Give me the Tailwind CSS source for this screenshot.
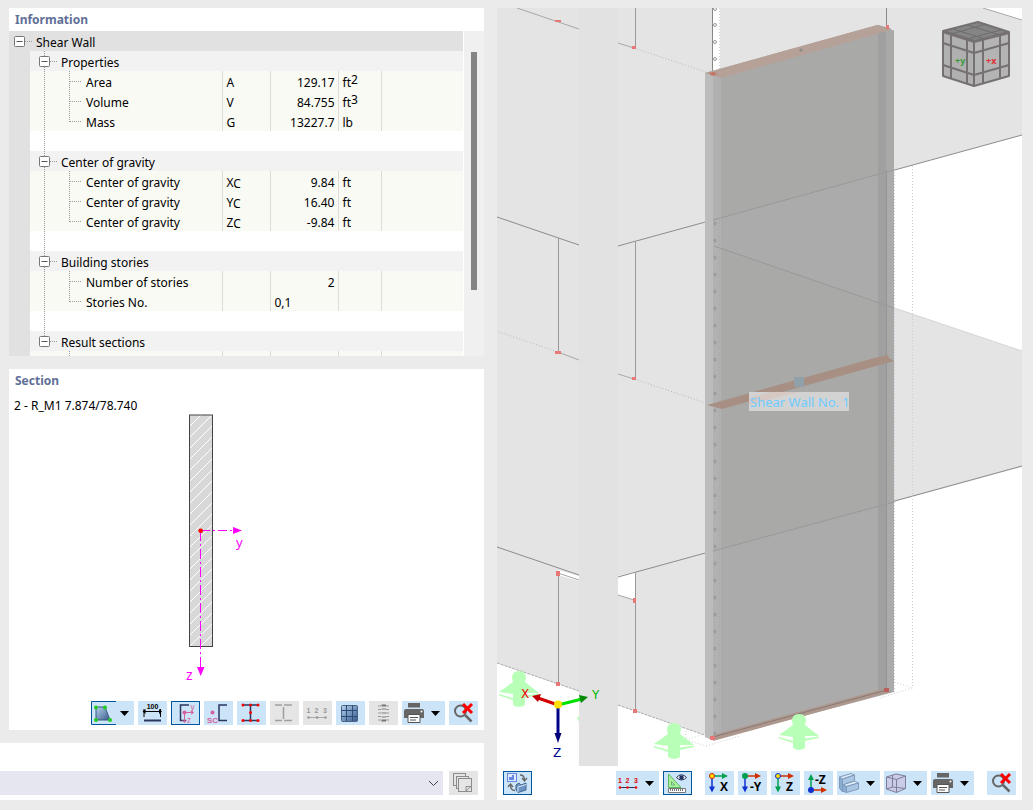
<!DOCTYPE html>
<html lang="en">
<head>
    <meta charset="UTF-8">
    <meta name="viewport" content="width=device-width, initial-scale=1.0">
    <title>Shear Wall</title>
    <script src="https://cdn.jsdelivr.net/npm/@tailwindcss/browser@4"></script>
</head>
<body class="bg-[#ebebeb] text-black text-[12px] font-['Noto_Sans','Open_Sans',sans-serif]">

    <!-- shared symbols -->
    <svg class="absolute h-0 w-0">
        <defs>
            <linearGradient id="blue" x1="0" y1="0" x2="1" y2="1">
                <stop offset="0" stop-color="#b5d3ec"/><stop offset="1" stop-color="#36598c"/>
            </linearGradient>
            <pattern id="hatch" width="11" height="11" patternUnits="userSpaceOnUse">
                <path d="M-1 12L12 -1M-1 1L1 -1M10 12L12 10" stroke="#fff" stroke-width="1"/>
            </pattern>
        </defs>
        <symbol id="branch" viewBox="0 0 31 20">
            <path d="M14.5 0V5M14.5 16V20M20 10.5H28" stroke="#9a9a9a" stroke-dasharray="1 1"/>
            <rect x="9.5" y="5.5" width="10" height="10" rx="1" fill="#fff" stroke="#777"/>
            <path d="M11.5 10.5H17.5" stroke="#555"/>
        </symbol>
        <symbol id="branch-last" viewBox="0 0 31 20">
            <path d="M14.5 0V5M20 10.5H28" stroke="#9a9a9a" stroke-dasharray="1 1"/>
            <rect x="9.5" y="5.5" width="10" height="10" rx="1" fill="#fff" stroke="#777"/>
            <path d="M11.5 10.5H17.5" stroke="#555"/>
        </symbol>
        <symbol id="leaf" viewBox="0 0 56 20">
            <path d="M14.5 0V20M39.5 0V20M40 10.5H52" stroke="#9a9a9a" stroke-dasharray="1 1"/>
        </symbol>
        <symbol id="leaf-end" viewBox="0 0 56 20">
            <path d="M14.5 0V20M39.5 0V11M40 10.5H52" stroke="#9a9a9a" stroke-dasharray="1 1"/>
        </symbol>
        <symbol id="caret" viewBox="0 0 9 5"><path d="M0 0H9L4.5 5Z" fill="#000"/></symbol>
        <symbol id="printer" viewBox="0 0 29 24">
            <path d="M6 2H18V6.5H6Z" fill="#666"/>
            <path d="M4 8H20Q22 8 22 10V17H2V10Q2 8 4 8Z" fill="#666"/>
            <circle cx="19.5" cy="10.5" r="1" fill="#fff"/>
            <path d="M6 13.5H18V21.5H6Z" fill="#fff" stroke="#555"/>
            <path d="M8 16.5H16M8 19H14" stroke="#555"/>
        </symbol>
        <symbol id="zoom-off" viewBox="0 0 29 24">
            <circle cx="11.5" cy="10" r="5.5" fill="none" stroke="#666" stroke-width="2"/>
            <path d="M16 14L22.5 20.5" stroke="#666" stroke-width="2.5"/>
            <path d="M14 3L23 12M23 3L14 12" stroke="#f00" stroke-width="3"/>
        </symbol>
        <symbol id="support" viewBox="0 0 41 37">
            <path d="M13 7Q13 0 20 0T27 7L26 11L40 22L26 22V34Q20 38 14 34V23L0 21L14 11Z" fill="#b8ffb8"/>
            <path d="M0 23L14 27V29L0 24.5ZM26 24.5L40 22.5V24L26 27Z" fill="#b8ffb8"/>
        </symbol>
    </svg>

    <div class="grid h-screen grid-cols-[484fr_525fr] gap-[13px] pt-2 pr-[11px] pb-[10px]">

        <div class="flex min-h-0 min-w-0 flex-col gap-[13px]">

            <!-- Information -->
            <section class="ml-[9px] flex min-h-0 flex-[348] flex-col overflow-hidden bg-white">
                <h2 class="h-[23px] shrink-0 pl-[6px] leading-[23px] font-bold text-[#5f6f98]">Information</h2>
                <div class="flex min-h-0 flex-1">
                    <div class="min-w-0 flex-1 overflow-hidden">
                        <div class="flex h-5 bg-[#e1e1e1]">
                            <svg class="h-5 w-[27px]" viewBox="0 0 27 20">
                                <path d="M16 10.5H24" stroke="#9a9a9a" stroke-dasharray="1 1"/>
                                <rect x="5.5" y="5.5" width="10" height="10" rx="1" fill="#fff" stroke="#777"/>
                                <path d="M7.5 10.5H13.5" stroke="#555"/>
                            </svg>
                            <span class="pt-1 leading-4">Shear Wall</span>
                        </div>
                        <div class="border-l-[21px] border-[#e1e1e1]">
                            <table class="w-full table-fixed border-collapse leading-4 [&_div]:pt-1 [&_td]:h-5 [&_td]:p-0 [&_th]:h-5 [&_th]:p-0 [&_th]:text-left [&_th]:font-normal [&_div>svg]:-mt-1">
                                <colgroup>
                                    <col><col class="w-[48px]"><col class="w-[68px]"><col class="w-[43px]"><col class="w-[82px]">
                                </colgroup>
                                <tbody>
                                    <tr class="bg-[#f2f2f2]"><th colspan="5"><div class="flex"><svg class="h-5 w-[31px]"><use href="#branch"/></svg>Properties</div></th></tr>
                                    <tr class="bg-[#f9faf4] [&>td]:border-l [&>td]:border-[#dcdcd8]"><th><div class="flex"><svg class="h-5 w-14"><use href="#leaf"/></svg>Area</div></th><td><div class="pl-1">A</div></td><td><div class="pr-[3px] text-right">129.17</div></td><td><div class="pl-1">ft<span class="relative -top-[3px]">2</span></div></td><td></td></tr>
                                    <tr class="bg-[#f9faf4] [&>td]:border-l [&>td]:border-[#dcdcd8]"><th><div class="flex"><svg class="h-5 w-14"><use href="#leaf"/></svg>Volume</div></th><td><div class="pl-1">V</div></td><td><div class="pr-[3px] text-right">84.755</div></td><td><div class="pl-1">ft<span class="relative -top-[3px]">3</span></div></td><td></td></tr>
                                    <tr class="bg-[#f9faf4] [&>td]:border-l [&>td]:border-[#dcdcd8]"><th><div class="flex"><svg class="h-5 w-14"><use href="#leaf-end"/></svg>Mass</div></th><td><div class="pl-1">G</div></td><td><div class="pr-[3px] text-right">13227.7</div></td><td><div class="pl-1">lb</div></td><td></td></tr>
                                    <tr><td colspan="5"><svg class="h-5 w-14"><path d="M14.5 0V20" stroke="#9a9a9a" stroke-dasharray="1 1"/></svg></td></tr>

                                    <tr class="bg-[#f2f2f2]"><th colspan="5"><div class="flex"><svg class="h-5 w-[31px]"><use href="#branch"/></svg>Center of gravity</div></th></tr>
                                    <tr class="bg-[#f9faf4] [&>td]:border-l [&>td]:border-[#dcdcd8]"><th><div class="flex"><svg class="h-5 w-14"><use href="#leaf"/></svg>Center of gravity</div></th><td><div class="pl-1">X<span class="relative top-px">C</span></div></td><td><div class="pr-[3px] text-right">9.84</div></td><td><div class="pl-1">ft</div></td><td></td></tr>
                                    <tr class="bg-[#f9faf4] [&>td]:border-l [&>td]:border-[#dcdcd8]"><th><div class="flex"><svg class="h-5 w-14"><use href="#leaf"/></svg>Center of gravity</div></th><td><div class="pl-1">Y<span class="relative top-px">C</span></div></td><td><div class="pr-[3px] text-right">16.40</div></td><td><div class="pl-1">ft</div></td><td></td></tr>
                                    <tr class="bg-[#f9faf4] [&>td]:border-l [&>td]:border-[#dcdcd8]"><th><div class="flex"><svg class="h-5 w-14"><use href="#leaf-end"/></svg>Center of gravity</div></th><td><div class="pl-1">Z<span class="relative top-px">C</span></div></td><td><div class="pr-[3px] text-right">-9.84</div></td><td><div class="pl-1">ft</div></td><td></td></tr>
                                    <tr><td colspan="5"><svg class="h-5 w-14"><path d="M14.5 0V20" stroke="#9a9a9a" stroke-dasharray="1 1"/></svg></td></tr>

                                    <tr class="bg-[#f2f2f2]"><th colspan="5"><div class="flex"><svg class="h-5 w-[31px]"><use href="#branch"/></svg>Building stories</div></th></tr>
                                    <tr class="bg-[#f9faf4] [&>td]:border-l [&>td]:border-[#dcdcd8]"><th><div class="flex"><svg class="h-5 w-14"><use href="#leaf"/></svg>Number of stories</div></th><td></td><td><div class="pr-[3px] text-right">2</div></td><td></td><td></td></tr>
                                    <tr class="bg-[#f9faf4] [&>td]:border-l [&>td]:border-[#dcdcd8]"><th><div class="flex"><svg class="h-5 w-14"><use href="#leaf-end"/></svg>Stories No.</div></th><td></td><td><div class="pl-1">0,1</div></td><td></td><td></td></tr>
                                    <tr><td colspan="5"><svg class="h-5 w-14"><path d="M14.5 0V20" stroke="#9a9a9a" stroke-dasharray="1 1"/></svg></td></tr>

                                    <tr class="bg-[#f2f2f2]"><th colspan="5"><div class="flex"><svg class="h-5 w-[31px]"><use href="#branch-last"/></svg>Result sections</div></th></tr>
                                    <tr class="bg-[#f9faf4] [&>td]:border-l [&>td]:border-[#dcdcd8]"><th><svg class="h-5 w-14"><path d="M39.5 0V20" stroke="#9a9a9a" stroke-dasharray="1 1"/></svg></th><td></td><td></td><td></td><td></td></tr>
                                </tbody>
                            </table>
                        </div>
                    </div>
                    <div class="ml-px w-5 bg-[#f0f0f0] pt-[21px] pl-[7px]">
                        <div class="h-[238px] w-[6px] bg-[#858585]"></div>
                    </div>
                </div>
            </section>

            <!-- Section -->
            <section class="ml-[9px] flex min-h-0 flex-[361] flex-col bg-white">
                <h2 class="h-[23px] pl-[6px] leading-[23px] font-bold text-[#5f6f98]">Section</h2>
                <p class="mt-1 h-[18px] pl-[5px] leading-5">2 - R_M1 7.874/78.740</p>
                <svg class="min-h-0 w-full flex-1" viewBox="9 414 475 287" preserveAspectRatio="xMidYMid meet">
                    <rect x="189.500" y="415" width="23" height="231.500" fill="#d8d8d8"/>
                    <rect x="189.500" y="415" width="23" height="231.500" fill="url(#hatch)" stroke="#444"/>
                    <path d="M201 530.500H233" stroke="#f0f" stroke-dasharray="9 3 2 3"/>
                    <path d="M200.500 531V667" stroke="#f0f" stroke-dasharray="10 3 2 3"/>
                    <path d="M233 527L242 530.500L233 534ZM197 667H204.500L200.700 676Z" fill="#f0f"/>
                    <circle cx="200.700" cy="530.700" r="2.300" fill="#f00"/>
                    <text x="236" y="547" font-size="13" fill="#f0f">y</text>
                    <text x="186" y="680" font-size="14" fill="#f0f">z</text>
                </svg>
                <div class="mb-[5px] flex h-6 justify-end gap-1 pr-[6px]">
                    <button aria-label="Stress points" class="flex w-[43px] items-center bg-[#cce4f7]">
                        <svg class="h-6 w-[29px]" viewBox="0 0 29 24">
                            <path d="M25 .5H.5V23.5H25" fill="none" stroke="#00559f"/>
                            <path d="M5 6H14L19 19H5Z" fill="url(#blue)" stroke="#3a5a80"/>
                            <g fill="#2c2"><circle cx="5" cy="6.500" r="2"/><circle cx="14" cy="6.500" r="2"/><circle cx="5" cy="19" r="2"/><circle cx="19" cy="19" r="2"/></g>
                        </svg>
                        <svg class="h-[5px] w-[9px]"><use href="#caret"/></svg>
                    </button>
                    <button aria-label="Dimensions" class="w-[29px] bg-[#cce4f7]">
                        <svg class="h-6 w-[29px]" viewBox="0 0 29 24">
                            <text x="14.500" y="8" font-size="7" font-weight="700" font-family="Liberation Sans" text-anchor="middle">100</text>
                            <path d="M6 8V16M22.5 8V16M6 10.5H22" stroke="#000"/>
                            <path d="M4.5 10.5L7.5 8V13ZM24 10.5L21 8V13Z" fill="#000"/>
                            <path d="M6 19.5H23" stroke="#2a3560" stroke-width="2"/>
                        </svg>
                    </button>
                    <button aria-label="Principal axes" class="w-[29px] bg-[#cce4f7]">
                        <svg class="h-6 w-[29px]" viewBox="0 0 29 24">
                            <rect x=".5" y=".5" width="28" height="23" fill="none" stroke="#00559f"/>
                            <path d="M18 4H9.500V19.500H15" fill="none" stroke="#2a3560" stroke-width="1.500"/>
                            <path d="M13.500 11.500H22M13.500 11.500V21M20 9.500L22.500 11.500L20 13.500M11.500 19L13.500 21.500L15.500 19" fill="none" stroke="#d4609c"/>
                            <circle cx="13.500" cy="11.500" r="2" fill="#d4609c"/>
                            <text x="19.500" y="8.500" font-size="8" fill="#d4609c">y</text>
                            <text x="16" y="21.500" font-size="8" fill="#d4609c">z</text>
                        </svg>
                    </button>
                    <button aria-label="Shear center" class="w-[29px] bg-[#cce4f7]">
                        <svg class="h-6 w-[29px]" viewBox="0 0 29 24">
                            <path d="M23 4H15V19.500H23" fill="none" stroke="#2a3560" stroke-width="1.500"/>
                            <circle cx="8.500" cy="11.500" r="2" fill="#d4609c"/>
                            <text x="3" y="22" font-size="8" font-family="Liberation Sans" font-weight="700" fill="#d4609c">SC</text>
                        </svg>
                    </button>
                    <button aria-label="Section points" class="w-[29px] bg-[#cce4f7]">
                        <svg class="h-6 w-[29px]" viewBox="0 0 29 24">
                            <path d="M6 4H21M6 19.500H21M13.500 4V19" stroke="#2a3560" stroke-width="1.500"/>
                            <g fill="#f00"><circle cx="6" cy="4" r="1.500"/><circle cx="13.500" cy="4" r="1.500"/><circle cx="21" cy="4" r="1.500"/><circle cx="13.500" cy="11.500" r="1.500"/><circle cx="6" cy="19.500" r="1.500"/><circle cx="13.500" cy="19.500" r="1.500"/><circle cx="21" cy="19.500" r="1.500"/></g>
                        </svg>
                    </button>
                    <button aria-label="Section parts" class="w-[29px] bg-[#e5e5e5]">
                        <svg class="h-6 w-[29px]" viewBox="0 0 29 24">
                            <path d="M5 4H12M14 4H22M5 19.500H12M14 19.500H22M13.500 6V18" stroke="#a0a0a0" stroke-width="1.500"/>
                        </svg>
                    </button>
                    <button aria-label="Numbering" class="w-[29px] bg-[#e5e5e5]">
                        <svg class="h-6 w-[29px]" viewBox="0 0 29 24">
                            <g font-size="7" font-weight="700" font-family="Liberation Sans" fill="#999"><text x="3.500" y="12">1</text><text x="11.500" y="12">2</text><text x="20" y="12">3</text></g>
                            <path d="M5 16.500H23" stroke="#aaa"/>
                            <g fill="#999"><circle cx="5.500" cy="16.500" r="1.300"/><circle cx="14" cy="16.500" r="1.300"/><circle cx="22.500" cy="16.500" r="1.300"/></g>
                        </svg>
                    </button>
                    <button aria-label="Grid" class="w-[29px] bg-[#cce4f7]">
                        <svg class="h-6 w-[29px]" viewBox="0 0 29 24">
                            <rect x="5.500" y="4.500" width="16" height="16" rx="1" fill="url(#blue)" stroke="#4a6488"/>
                            <path d="M10.500 4V20M16.500 4V20M5 9.500H21M5 15.500H21" stroke="#2b4c78"/>
                        </svg>
                    </button>
                    <button aria-label="Values" class="w-[29px] bg-[#e5e5e5]">
                        <svg class="h-6 w-[29px]" viewBox="0 0 29 24">
                            <path d="M9 5H12M17 5H20M9 8.500H12M17 8.500H20M9 12H12M17 12H20M9 15.500H12M17 15.500H20M9 19H12M17 19H20" stroke="#999"/>
                            <path d="M12.500 4.500H17M12.500 19.500H17" stroke="#777" stroke-width="2"/>
                            <path d="M12.500 8H17M12.500 12H17M12.500 16H17" stroke="#b0b0b0" stroke-width="2"/>
                        </svg>
                    </button>
                    <button aria-label="Print" class="flex w-[43px] items-center bg-[#cce4f7]">
                        <svg class="h-6 w-[29px]"><use href="#printer"/></svg>
                        <svg class="h-[5px] w-[9px]"><use href="#caret"/></svg>
                    </button>
                    <button aria-label="Reset view" class="w-[29px] bg-[#cce4f7]"><svg class="h-6 w-[29px]"><use href="#zoom-off"/></svg></button>
                </div>
            </section>

            <!-- object selection -->
            <div class="flex items-end gap-[6px] bg-white pt-7 pr-[6px] pb-[5px]">
                <div class="relative flex-1">
                    <select aria-label="Object" class="block h-6 w-full appearance-none bg-[#e6e6f1]"><option></option></select>
                    <svg class="pointer-events-none absolute top-[9px] right-1 h-[7px] w-[11px]" viewBox="0 0 11 7"><path d="M1 1L5.500 5.500L10 1" fill="none" stroke="#444"/></svg>
                </div>
                <button aria-label="Copy" class="h-6 w-[29px] bg-[#e5e5e5]">
                    <svg class="h-6 w-[29px]" viewBox="0 0 29 24">
                        <g fill="#e5e5e5" stroke="#8c8c8c"><rect x="4.500" y="2.500" width="12" height="12"/><rect x="7.500" y="5.500" width="12" height="12"/><rect x="9.500" y="7.500" width="13" height="13"/><path d="M17 20V15.500H22M17 20L22 15.500"/></g>
                    </svg>
                </button>
            </div>
        </div>

        <!-- model view -->
        <div class="flex min-h-0 min-w-0 flex-col bg-white">
            <svg class="min-h-0 w-full flex-1" viewBox="497 8 525 758" preserveAspectRatio="xMidYMid slice">
                <!-- slabs and walls -->
                <g fill="#e4e4e4">
                    <path d="M497 8H983L1022 20V135L714 219V246L1022 351V467L714 551V738L618 705L579 691L497 663Z"/>
                    <path d="M579 8H618V766H579Z" fill="#e2e2e2"/>
                </g>
                <path d="M713 8H720V72H713ZM618 576L635 572V600L618 595ZM558 570L579 576V581L558 575Z" fill="#fff"/>
                <g fill="none" stroke="#999">
                    <path d="M497 217L579 245M618 246L1022 135M497 547L579 575M618 577L1022 466" stroke="#8c8c8c"/>
                    <path d="M517 8L579 29M618 43L634 48M558 352L579 360M618 374L634 379M618 595L634 600M558 573L579 580M983 8L1022 20" stroke="#a8a8a8"/>
                    <path d="M634 48L706 72M499 332L558 352M634 379L706 403" stroke="#b8b8b8" stroke-dasharray="1 2"/>
                    <path d="M497 663L579 691M618 705L713 738" stroke="#aaa" stroke-dasharray="3 1"/>
                    <path d="M558.500 238V351M558.500 573V684M635.500 8V47M635.500 242V378M635.500 573V711"/>
                    <path d="M712.500 8V72M886.500 8V27" stroke="#888"/>
                    <path d="M894 308L1022 351" stroke="#d6d6d6"/>
                    <path d="M719.500 8V72M894.500 172V692M912.500 166V688L894 682M912 688L880 698M686 731V740L706 746L740 736M686 740L706 733" stroke="#ccccd6" stroke-dasharray="1 2"/>
                </g>
                <g fill="none" stroke="#999"><circle cx="715" cy="9" r="1.500"/><circle cx="715" cy="25" r="1.500"/><circle cx="715" cy="42" r="1.500"/><circle cx="715" cy="59" r="1.500"/></g>
                <!-- wall -->
                <path d="M705 73L878 25L890 28L894 32V692L713 740L705 737Z" fill="#ababab"/>
                <path d="M721 78L894 30V170L721 218ZM721 248L894 308V502L721 549Z" fill="#a9a9a8"/>
                <path d="M705 73L713 75V740L705 737Z" fill="#bcbcbc"/>
                <path d="M713 75L721 78V738L713 740Z" fill="#b1b1b1"/>
                <path d="M878 25L886 28V693L878 695Z" fill="#a0a0a0"/>
                <path d="M886.500 170V690" stroke="#959595"/>
                <path d="M713 220L894 170M714 246L894 308M713 551L894 502" fill="none" stroke="#999"/>
                <path d="M715 223V735" stroke="#9d9d9d" stroke-width="3" stroke-linecap="round" stroke-dasharray="1 16"/>
                <path d="M719.500 220V735" stroke="#a6a6a6" stroke-dasharray="1 2"/>
                <path d="M705 73L877 25L891 30L721 78Z" fill="#b5a198"/>
                <path d="M707 405L878 357L888 355L889 358L894 361L722 409Z" fill="#a88f83"/>
                <path d="M713 735L886 688L891 692L713 741Z" fill="#ae988e"/>
                <path d="M713 737L887 690" stroke="#877a76"/>
                <circle cx="801" cy="50" r="1.500" fill="#888"/>
                <rect x="794" y="377" width="10" height="10" fill="#90a1a9"/>
                <path d="M709 73L714 72L717 74L712 76Z" fill="#c77462"/>
                <g fill="#e87878"><rect x="555" y="20" width="6" height="2"/><rect x="632" y="46" width="4" height="3"/><rect x="555" y="351" width="6" height="3"/><rect x="632" y="377" width="4" height="3"/><rect x="556" y="571" width="4" height="5"/><rect x="633" y="598" width="3" height="5"/><rect x="556" y="682" width="4" height="4"/><rect x="633" y="709" width="4" height="4"/><rect x="710" y="736" width="5" height="4"/><rect x="886" y="25" width="3" height="4"/></g>
                <rect x="884" y="688" width="5" height="4" fill="#b85f5c"/>
                <!-- supports -->
                <use href="#support" x="499" y="671" width="41" height="37"/>
                <use href="#support" x="654" y="723" width="41" height="37"/>
                <use href="#support" x="779" y="714" width="41" height="37"/>
                <path d="M577 718L579 716V722Z" fill="#b8ffb8"/>
                <!-- object label -->
                <rect x="749" y="392" width="100" height="19" fill="#d3d3d3"/>
                <path d="M749 398L770 392H798L749 405Z" fill="#d6c9c4"/>
                <text x="750" y="407" font-size="13" fill="#70cbff">Shear Wall No. 1</text>
                <!-- view cube -->
                <g stroke="#767171" stroke-width="2" stroke-linejoin="round">
                    <path d="M943 31L978 22L1009 32L975 41Z" fill="#858585"/>
                    <path d="M943 32L974 42V86L943 76Z" fill="#b0b0b0"/>
                    <path d="M1009 33L974 42V86L1009 76Z" fill="#b4b4b4"/>
                    <path d="M953 29L985 39M967 25L1000 35M951 34L986 24M967 39L1001 30" stroke="#6c6c6c" stroke-width="1" fill="none"/>
                    <path d="M951 34V79M967 40V84M983 40V84M1000 35V79M943 43L974 53L1009 43M943 65L974 75L1009 65" fill="none"/>
                </g>
                <text x="955" y="64" font-size="9" font-weight="700" fill="#3b9b3b">+y</text>
                <text x="986" y="64" font-size="9" font-weight="700" fill="#e03030">+x</text>
                <!-- global axes -->
                <path d="M558 705L538 698" stroke="#d00000" stroke-width="3"/>
                <path d="M532 696L541 694L538 702Z" fill="#c00000"/>
                <path d="M558 705L582 699" stroke="#00e000" stroke-width="3"/>
                <path d="M588 697L579 695L581 703Z" fill="#008a00"/>
                <path d="M558 705V735" stroke="#00008b" stroke-width="3"/>
                <path d="M554.500 733H561.500L558 743Z" fill="#000078"/>
                <circle cx="558" cy="704.500" r="4" fill="#ffe000"/>
                <text x="521" y="698" font-size="12" font-family="DejaVu Sans" fill="#f00000">X</text>
                <text x="592" y="699" font-size="12" font-family="DejaVu Sans" fill="#00b800">Y</text>
                <text x="553" y="757" font-size="12" font-family="DejaVu Sans" fill="#000090">Z</text>
            </svg>

            <div class="mt-[5px] mb-[5px] flex h-6 gap-1 px-[6px]">
                <button aria-label="Synchronize views" class="mr-auto w-[29px] bg-[#cce4f7]">
                    <svg class="h-6 w-[29px]" viewBox="0 0 29 24">
                        <rect x=".5" y=".5" width="28" height="23" fill="none" stroke="#00559f"/>
                        <rect x="4.500" y="2.500" width="9" height="8" fill="#dfe9ff" stroke="#6688e0"/>
                        <path d="M6 9V6H9V4H11V9Z" fill="#6688e0"/>
                        <path d="M17 4Q21.500 4 21.500 9M19 7L21.500 10L24 7M12 19.500Q7.500 19.500 7.500 14M5 16L7.500 13L10 16" fill="none" stroke="#666" stroke-width="1.300"/>
                        <path d="M13 14L16 12L18 14L23 12V19L15 21.500L13 19Z" fill="#6a94c4" stroke="#44688f"/>
                        <path d="M15 16L23 13.500M15 16V21" stroke="#dbe9f6" fill="none"/>
                    </svg>
                </button>
                <button aria-label="Numbering" class="flex w-[43px] items-center bg-[#cce4f7]">
                    <svg class="h-6 w-[29px]" viewBox="0 0 29 24">
                        <g font-size="7" font-weight="700" font-family="Liberation Sans" fill="#e00000"><text x="2" y="12">1</text><text x="9.500" y="12">2</text><text x="18" y="12">3</text></g>
                        <path d="M4 16.500H20" stroke="#2a3560"/>
                        <g fill="#f00"><circle cx="4" cy="16.500" r="1.300"/><circle cx="11.500" cy="16.500" r="1.300"/><circle cx="20" cy="16.500" r="1.300"/></g>
                    </svg>
                    <svg class="h-[5px] w-[9px]"><use href="#caret"/></svg>
                </button>
                <button aria-label="Visibility" class="mr-[9px] w-[29px] bg-[#cce4f7]">
                    <svg class="h-6 w-[29px]" viewBox="0 0 29 24">
                        <rect x=".5" y=".5" width="28" height="23" fill="none" stroke="#00559f"/>
                        <path d="M5.500 3V16.500H18Z" fill="#aef0a0" stroke="#5cb860"/>
                        <path d="M8.500 10.500V14H12Z" fill="#cce4f7" stroke="#5cb860"/>
                        <path d="M13.500 6.500Q18.500 1 23.500 6.500Q18.500 11.500 13.500 6.500Z" fill="#fff" stroke="#223060"/>
                        <circle cx="18.500" cy="6.500" r="2.200" fill="#223060"/>
                        <path d="M5.500 17.500H22.500V21.500H5.500Z" fill="#fff" stroke="#777"/>
                        <path d="M7.500 18V20M9.500 18V20M11.500 18V20M13.500 18V20M15.500 18V20M17.500 18V20M19.500 18V20" stroke="#777"/>
                    </svg>
                </button>
                <button aria-label="View in X" class="w-[29px] bg-[#cce4f7]">
                    <svg class="h-6 w-[29px]" viewBox="0 0 29 24">
                        <path d="M7 5H18" stroke="#00a050" stroke-width="1.500"/><path d="M17 2L23 5L17 8Z" fill="#00a050"/>
                        <path d="M7 5V16" stroke="#1030d0" stroke-width="1.500"/><path d="M4 15.500H10L7 21.500Z" fill="#1030d0"/>
                        <circle cx="7" cy="5" r="2.500" fill="#fd0" stroke="#d02000"/>
                        <text x="15" y="20" font-size="12" font-weight="700" font-family="Open Sans">X</text>
                    </svg>
                </button>
                <button aria-label="View in -Y" class="w-[29px] bg-[#cce4f7]">
                    <svg class="h-6 w-[29px]" viewBox="0 0 29 24">
                        <path d="M7 5H18" stroke="#d03000" stroke-width="1.500"/><path d="M17 2L23 5L17 8Z" fill="#d03000"/>
                        <path d="M7 5V16" stroke="#1030d0" stroke-width="1.500"/><path d="M4 15.500H10L7 21.500Z" fill="#1030d0"/>
                        <circle cx="7" cy="5" r="3" fill="#00a050"/>
                        <text x="12" y="20" font-size="12" font-weight="700" font-family="Open Sans">-Y</text>
                    </svg>
                </button>
                <button aria-label="View in Z" class="w-[29px] bg-[#cce4f7]">
                    <svg class="h-6 w-[29px]" viewBox="0 0 29 24">
                        <path d="M7 5H18" stroke="#d03000" stroke-width="1.500"/><path d="M17 2L23 5L17 8Z" fill="#d03000"/>
                        <path d="M7 5V16" stroke="#00a050" stroke-width="1.500"/><path d="M4 15.500H10L7 21.500Z" fill="#00a050"/>
                        <circle cx="7" cy="5" r="2.500" fill="#fd0" stroke="#1030d0"/>
                        <text x="15" y="20" font-size="12" font-weight="700" font-family="Open Sans">Z</text>
                    </svg>
                </button>
                <button aria-label="View in -Z" class="w-[29px] bg-[#cce4f7]">
                    <svg class="h-6 w-[29px]" viewBox="0 0 29 24">
                        <path d="M7 19H18" stroke="#d03000" stroke-width="1.500"/><path d="M17 16L23 19L17 22Z" fill="#d03000"/>
                        <path d="M7 19V8" stroke="#00a050" stroke-width="1.500"/><path d="M4 9H10L7 3Z" fill="#00a050"/>
                        <circle cx="7" cy="19" r="3" fill="#1030d0"/>
                        <text x="11" y="13" font-size="12" font-weight="700" font-family="Open Sans">-Z</text>
                    </svg>
                </button>
                <button aria-label="Display mode" class="flex w-[43px] items-center bg-[#cce4f7]">
                    <svg class="h-6 w-[29px]" viewBox="0 0 29 24">
                        <g stroke="#7f9abb" stroke-linejoin="round">
                            <path d="M2.500 6L5.500 8V21L2.500 17Z" fill="#8aaed2"/>
                            <path d="M2.500 6L14 2.500L17.500 4L5.500 8Z" fill="#dcecf8"/>
                            <path d="M5.500 8L17.500 4V10L9 12.500V15L5.500 14Z" fill="#a9c6e2"/>
                            <path d="M5.500 14L17.500 10L21.500 12L9.500 15.500Z" fill="#dcecf8"/>
                            <path d="M9.500 15.500L21.500 12V18L9.500 21.500Z" fill="#a9c6e2"/>
                            <path d="M5.500 14L9.500 15.500V21.500L5.500 20Z" fill="#8aaed2"/>
                        </g>
                    </svg>
                    <svg class="h-[5px] w-[9px]"><use href="#caret"/></svg>
                </button>
                <button aria-label="Transparency" class="flex w-[43px] items-center bg-[#cce4f7]">
                    <svg class="h-6 w-[29px]" viewBox="0 0 29 24">
                        <g fill="#c9c6e0" fill-opacity=".8" stroke="#7d7d9c" stroke-linejoin="round">
                            <path d="M2.500 6L12 3L21.500 5V17.500L12.500 21.500L2.500 18Z"/>
                            <path d="M2.500 6L12.500 8.500L21.500 5M12.500 8.500V21.500M8.500 4V16L2.500 18M8.500 16L21.500 17.500" fill="none"/>
                        </g>
                    </svg>
                    <svg class="h-[5px] w-[9px]"><use href="#caret"/></svg>
                </button>
                <button aria-label="Print" class="mr-[9px] flex w-[43px] items-center bg-[#cce4f7]">
                    <svg class="h-6 w-[29px]"><use href="#printer"/></svg>
                    <svg class="h-[5px] w-[9px]"><use href="#caret"/></svg>
                </button>
                <button aria-label="Reset view" class="w-[29px] bg-[#cce4f7]"><svg class="h-6 w-[29px]"><use href="#zoom-off"/></svg></button>
            </div>
        </div>
    </div>
</body>
</html>
